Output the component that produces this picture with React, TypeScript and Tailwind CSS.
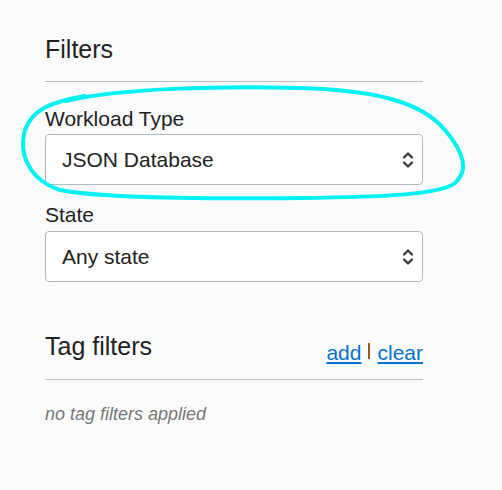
import React from "react"

function Chevrons(){
  return(
    <svg width="12" height="22" viewBox="0 0 12 22" fill="none" className="shrink-0">
      <path d="M2 8.5 L6 4.5 L10 8.5" stroke="#333" strokeWidth="2.2" strokeLinecap="round" strokeLinejoin="round"/>
      <path d="M2 13.5 L6 17.5 L10 13.5" stroke="#333" strokeWidth="2.2" strokeLinecap="round" strokeLinejoin="round"/>
    </svg>
  )
}

function SelectBox({value}:{value:string}){
  return(
    <div className="h-[51px] bg-white border border-[#b3b7bf] rounded-[4px] flex items-center justify-between pl-[16px] pr-[8px]">
      <span className="text-[21px] text-[#222]">{value}</span>
      <Chevrons/>
    </div>
  )
}

export default function App(){

  return(

    <div className="relative w-[502px] h-[490px] bg-[#fbfbfc] font-['Liberation_Sans',Arial,sans-serif] overflow-hidden">

      <div className="w-[378px] ml-[45px] pt-[35px]">

        {/* FILTERS */}

        <h2 className="text-[25px] leading-[28px] text-[#222]">
          Filters
        </h2>

        <div className="h-px bg-[#b8bcc3] mt-[18px]"></div>

        <label className="block mt-[25px] text-[21px] leading-[24px] text-[#222]">
          Workload Type
        </label>

        <div className="mt-[3px]">
          <SelectBox value="JSON Database"/>
        </div>

        <label className="block mt-[18px] text-[21px] leading-[24px] text-[#222]">
          State
        </label>

        <div className="mt-[4px]">
          <SelectBox value="Any state"/>
        </div>

        {/* TAG FILTERS */}

        <div className="flex justify-between items-end mt-[50px]">

          <h2 className="text-[25px] leading-[28px] text-[#222] mb-[5px]">
            Tag filters
          </h2>

          <div className="text-[21px] leading-[24px] flex items-center">
            <a href="#" className="text-[#0572ce] underline decoration-2 underline-offset-[2px]">add</a>
            <span className="inline-block w-[2px] h-[16px] bg-[#9c5a1e] mx-[7px] -mt-[4px]"></span>
            <a href="#" className="text-[#0572ce] underline decoration-2 underline-offset-[2px]">clear</a>
          </div>

        </div>

        <div className="h-px bg-[#b8bcc3] mt-[14px]"></div>

        <p className="mt-[23px] text-[18px] leading-[22px] italic text-[#777]">
          no tag filters applied
        </p>

      </div>

      {/* HAND DRAWN HIGHLIGHT */}

      <svg className="absolute inset-0 pointer-events-none" width="502" height="490" viewBox="0 0 502 490" fill="none">
        <path
          d="M66 101 C120 88, 220 86, 300 88 C370 90, 420 100, 445 130 C462 150, 470 170, 455 183 C440 195, 380 197, 300 198 C200 199, 100 198, 60 190 C30 180, 18 155, 25 130 C32 110, 50 102, 85 96"
          stroke="#00f2f2"
          strokeWidth="4"
          strokeLinecap="round"
          strokeLinejoin="round"
        />
      </svg>

    </div>
  )
}
